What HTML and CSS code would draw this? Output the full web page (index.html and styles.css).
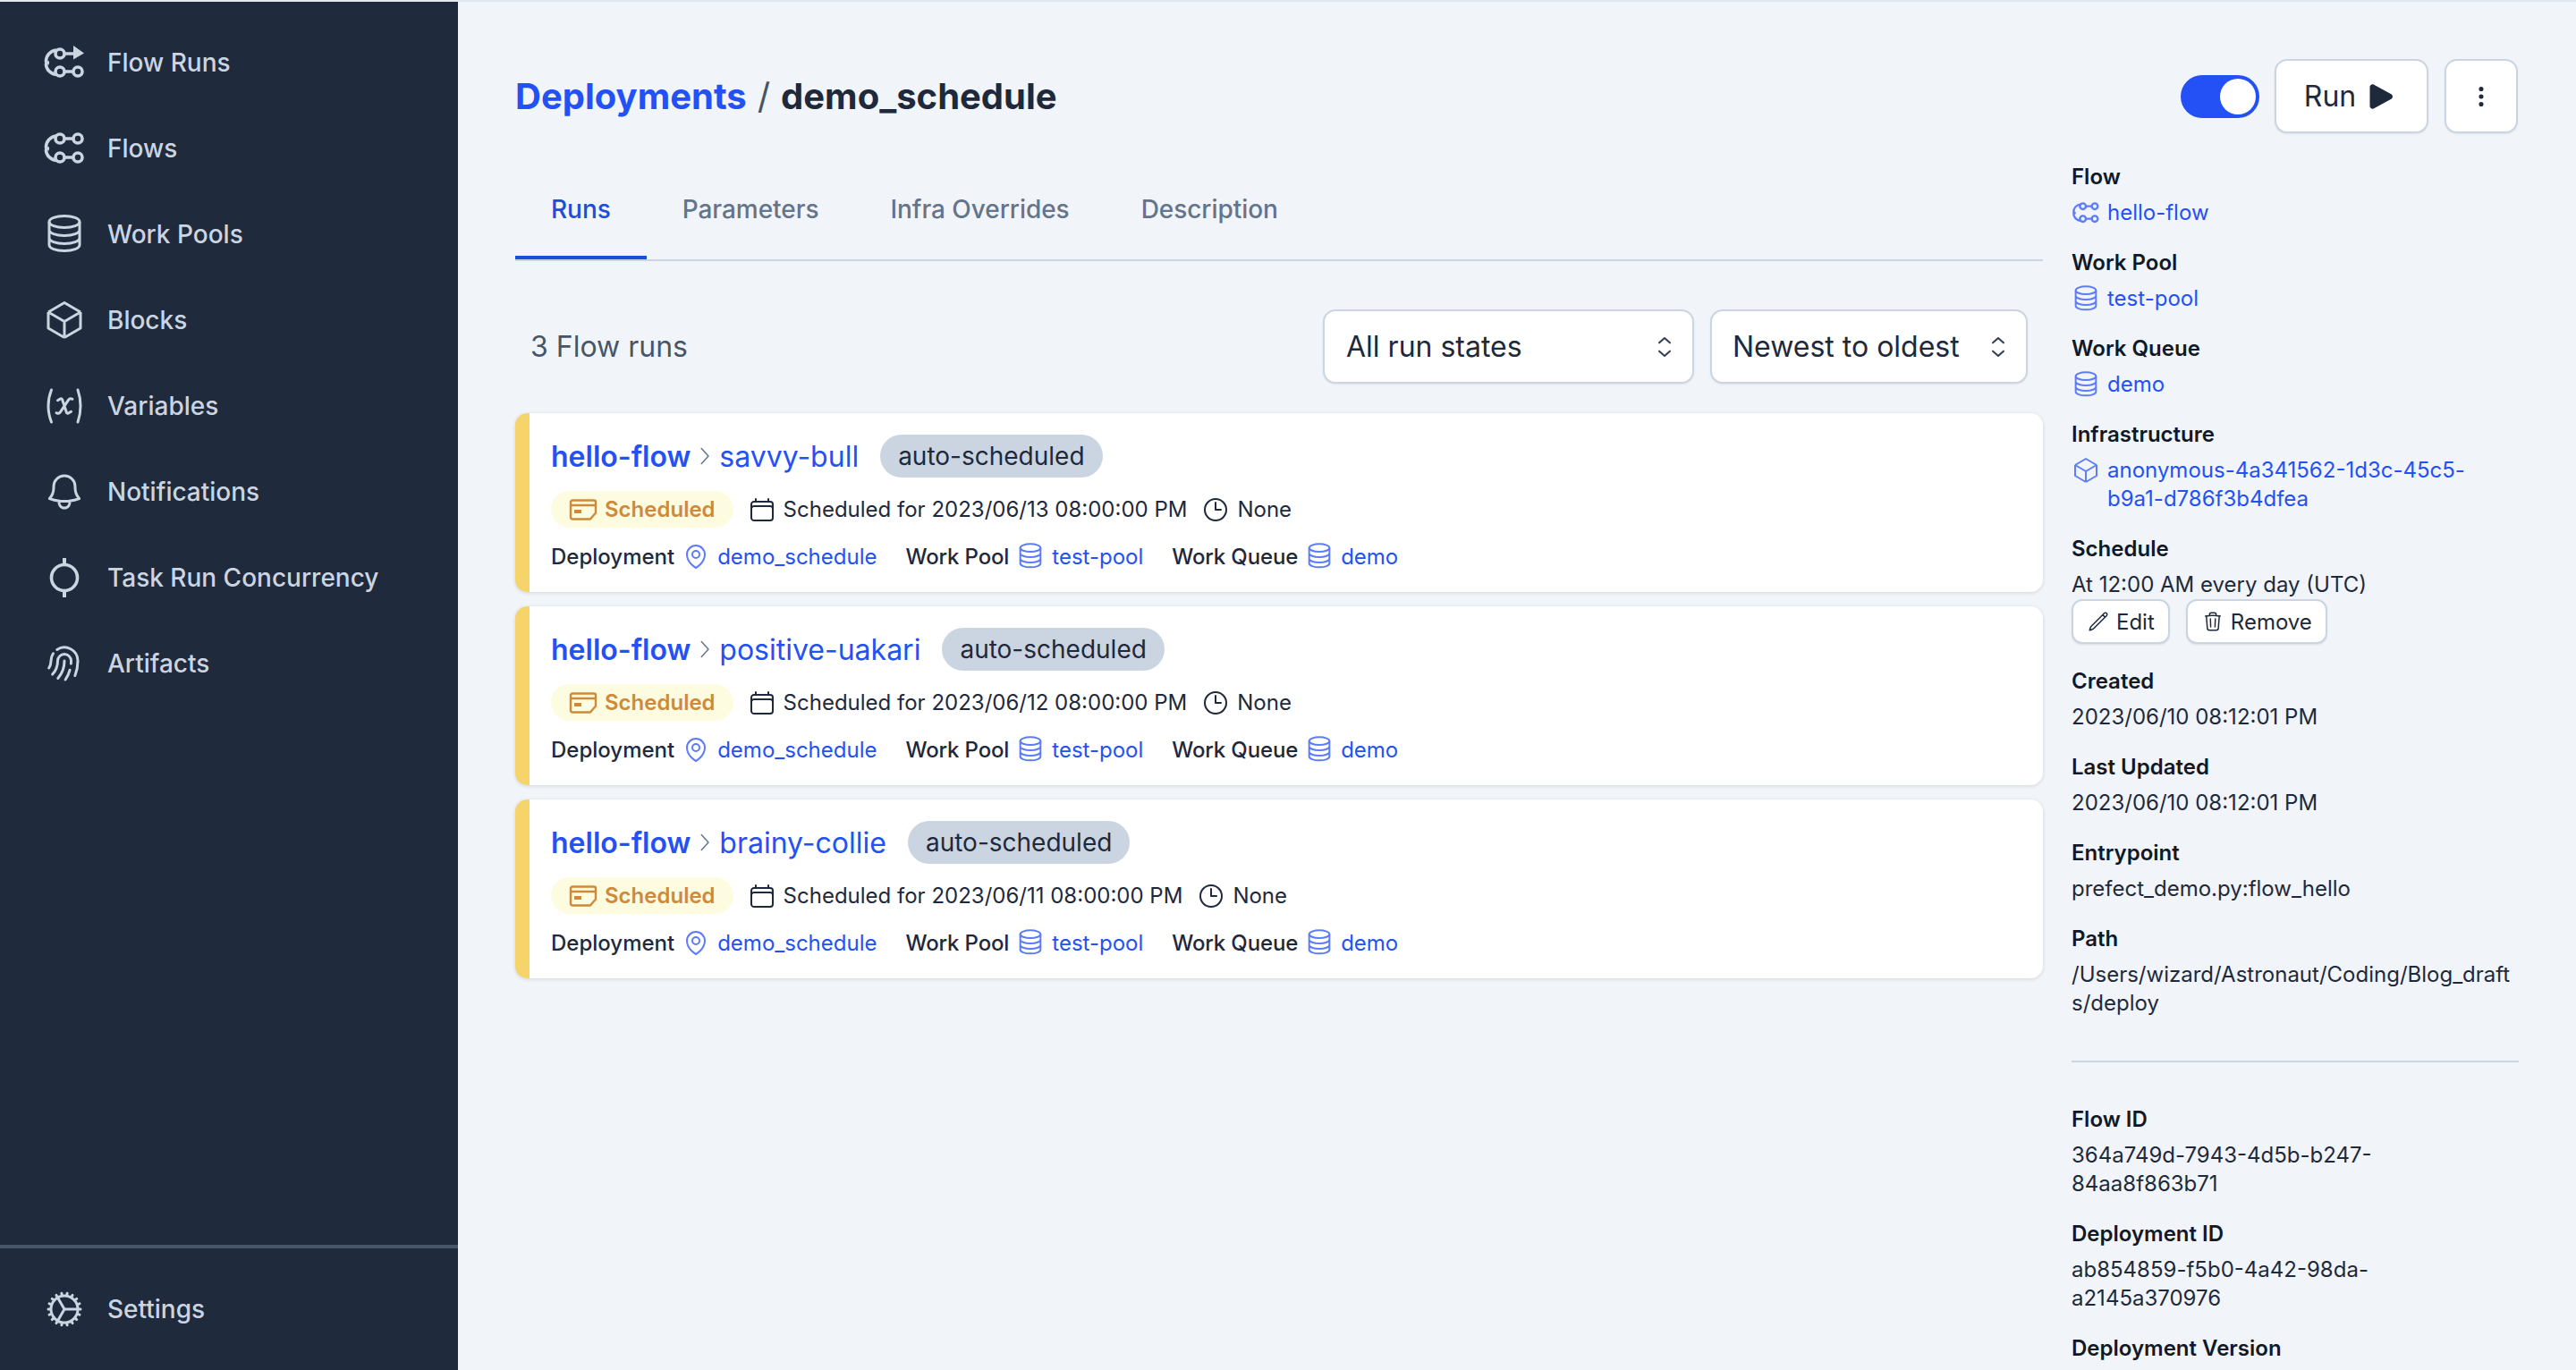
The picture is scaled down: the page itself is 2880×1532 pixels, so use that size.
FILE: index.html
```html
<!DOCTYPE html>
<html lang="en">
<head>
<meta charset="utf-8">
<title>demo_schedule</title>
<link rel="stylesheet" href="styles.css">
</head>
<body>
<svg class="sprite" xmlns="http://www.w3.org/2000/svg">
  <symbol id="i-flowruns" viewBox="0 0 48 48"><g fill="none" stroke="currentColor" stroke-width="3.600"><circle cx="19" cy="14" r="5"/><circle cx="19" cy="34" r="5"/><circle cx="39" cy="34" r="5"/><path d="M24 14h12M24 34h10M15 10C8 11 3.500 16 3.500 22.500C3.500 24 4.500 24.500 7 24.500M15 37.500C8 36.500 3.500 31 3.500 26C3.500 24.500 4.500 24 7 24"/></g><path fill="currentColor" d="M34 5l12 8.500-12 7z"/></symbol>
  <symbol id="i-flows" viewBox="0 0 48 48"><g fill="none" stroke="currentColor" stroke-width="3.600"><circle cx="19" cy="13" r="5"/><circle cx="39" cy="13" r="5"/><circle cx="19" cy="34" r="5"/><circle cx="39" cy="34" r="5"/><path d="M24 13h10M24 34h10M15 10C8 11 3.500 16 3.500 22.500C3.500 24 4.500 24.500 7 24.500M15 37.500C8 36.500 3.500 31 3.500 26C3.500 24.500 4.500 24 7 24"/></g></symbol>
  <symbol id="i-db" viewBox="0 0 48 48"><g fill="none" stroke="currentColor" stroke-width="3"><ellipse cx="24" cy="10" rx="17" ry="6.500"/><path d="M7 10v26c0 3.600 7.600 6.500 17 6.500s17-2.900 17-6.500V10M7 19c0 3.600 7.600 6.500 17 6.500s17-2.900 17-6.500M7 28c0 3.600 7.600 6.500 17 6.500s17-2.900 17-6.500"/></g></symbol>
  <symbol id="i-cube" viewBox="0 0 24 24"><path fill="none" stroke="currentColor" stroke-width="1.500" stroke-linejoin="round" d="M21 7.500l-9-5.250L3 7.500m18 0l-9 5.250m9-5.250v9l-9 5.250M3 7.500l9 5.250M3 7.500v9l9 5.250m0-9v9"/></symbol>
  <symbol id="i-var" viewBox="0 0 24 24"><path fill="none" stroke="currentColor" stroke-width="1.500" stroke-linecap="round" stroke-linejoin="round" d="M4.745 3A23.933 23.933 0 003 12c0 3.183.62 6.220 1.745 9M19.500 3c.967 2.780 1.500 5.817 1.500 9s-.533 6.220-1.500 9M8.250 8.885l1.444-.89a.75.75 0 011.105.402l2.402 7.206a.75.75 0 001.104.401l1.445-.889m-8.250.75l.213.09a1.687 1.687 0 002.062-.617l4.450-6.676a1.688 1.688 0 012.062-.618l.213.09"/></symbol>
  <symbol id="i-bell" viewBox="0 0 24 24"><path fill="none" stroke="currentColor" stroke-width="1.500" stroke-linecap="round" stroke-linejoin="round" d="M14.857 17.082a23.848 23.848 0 005.454-1.310A8.967 8.967 0 0118 9.750v-.7V9A6 6 0 006 9v.75a8.967 8.967 0 01-2.312 6.022c1.733.64 3.560 1.085 5.455 1.310m5.714 0a24.255 24.255 0 01-5.714 0m5.714 0a3 3 0 11-5.714 0"/></symbol>
  <symbol id="i-conc" viewBox="0 0 48 48"><g fill="none" stroke="currentColor" stroke-width="3.600"><circle cx="24" cy="24" r="14.500"/></g><path fill="currentColor" d="M22 2h4v8h-4zM22 38h4v8h-4z"/></symbol>
  <symbol id="i-print" viewBox="0 0 24 24"><path fill="none" stroke="currentColor" stroke-width="1.500" stroke-linecap="round" stroke-linejoin="round" d="M7.864 4.243A7.500 7.500 0 0119.500 10.500c0 2.920-.556 5.709-1.568 8.268M5.742 6.364A7.465 7.465 0 004.500 10.500a7.464 7.464 0 01-1.150 3.993m1.989 3.559A11.209 11.209 0 008.250 10.500a3.750 3.750 0 117.500 0c0 .527-.021 1.049-.064 1.565M12 10.500a14.940 14.940 0 01-3.600 9.750m6.633-4.596a18.666 18.666 0 01-2.485 5.330"/></symbol>
  <symbol id="i-cog" viewBox="0 0 24 24"><path fill="none" stroke="currentColor" stroke-width="1.500" stroke-linecap="round" stroke-linejoin="round" d="M4.500 12a7.500 7.500 0 0015 0m-15 0a7.500 7.500 0 1115 0m-15 0H3m16.500 0H21m-1.500 0H12m-8.457 3.077l1.410-.513m14.095-5.130l1.410-.513M5.106 17.785l1.150-.964m11.490-9.642l1.149-.964M7.501 19.795l.75-1.300m7.500-12.990l.75-1.300m-6.063 16.658l.26-1.477m2.605-14.772l.26-1.477m0 17.726l-.26-1.477M10.698 4.614l-.26-1.477M16.500 19.794l-.75-1.299M7.500 4.205L12 12m6.894 5.785l-1.149-.964M6.256 7.178l-1.150-.964m15.352 8.864l-1.410-.513M4.954 9.435l-1.410-.514M12.002 12l-3.750 6.495"/></symbol>
  <symbol id="i-play" viewBox="0 0 24 24"><path fill="currentColor" d="M4.500 5.653c0-1.426 1.529-2.330 2.779-1.643l11.540 6.348c1.295.712 1.295 2.573 0 3.285L7.280 19.991c-1.250.687-2.779-.217-2.779-1.643V5.653z"/></symbol>
  <symbol id="i-dots" viewBox="0 0 24 24"><g fill="currentColor"><circle cx="12" cy="5.600" r="1.900"/><circle cx="12" cy="12" r="1.900"/><circle cx="12" cy="18.400" r="1.900"/></g></symbol>
  <symbol id="i-updown" viewBox="0 0 24 24"><path fill="none" stroke="currentColor" stroke-width="1.800" stroke-linecap="round" stroke-linejoin="round" d="M6.900 8L12 3.500 17.100 8M6.900 16L12 20.500 17.100 16"/></symbol>
  <symbol id="i-chev" viewBox="0 0 24 24"><path fill="none" stroke="currentColor" stroke-width="1.500" stroke-linecap="round" stroke-linejoin="round" d="M8.250 3.500L16 12l-7.750 8.500"/></symbol>
  <symbol id="i-sched" viewBox="0 0 32 24"><g fill="none" stroke="currentColor" stroke-width="2.400" stroke-linejoin="round"><path d="M2 6.500V3.500a2 2 0 012-2h24a2 2 0 012 2v12L24 22.500H4a2 2 0 01-2-2zM2 7h28"/></g><path fill="currentColor" d="M6 12h8v4H6z"/></symbol>
  <symbol id="i-cal" viewBox="0 0 24 24"><path fill="none" stroke="currentColor" stroke-width="1.500" stroke-linecap="round" stroke-linejoin="round" d="M6.750 3v2.250M17.250 3v2.250M3 18.750V7.500a2.250 2.250 0 012.250-2.250h13.500A2.250 2.250 0 0121 7.500v11.250m-18 0A2.250 2.250 0 005.250 21h13.500A2.250 2.250 0 0021 18.750m-18 0v-7.500A2.250 2.250 0 015.250 9h13.500A2.250 2.250 0 0121 11.250v7.500"/></symbol>
  <symbol id="i-clock" viewBox="0 0 24 24"><path fill="none" stroke="currentColor" stroke-width="1.500" stroke-linecap="round" stroke-linejoin="round" d="M12 6v6h4.500m4.500 0a9 9 0 11-18 0 9 9 0 0118 0z"/></symbol>
  <symbol id="i-pin" viewBox="0 0 24 24"><g fill="none" stroke="currentColor" stroke-width="1.500" stroke-linecap="round" stroke-linejoin="round"><path d="M15 10.500a3 3 0 11-6 0 3 3 0 016 0z"/><path d="M19.500 10.500c0 7.142-7.500 11.250-7.500 11.250S4.500 17.642 4.500 10.500a7.500 7.500 0 1115 0z"/></g></symbol>
  <symbol id="i-pencil" viewBox="0 0 24 24"><path fill="none" stroke="currentColor" stroke-width="1.500" stroke-linecap="round" stroke-linejoin="round" d="M16.862 4.487l1.687-1.688a1.875 1.875 0 112.652 2.652L6.832 19.820a4.500 4.500 0 01-1.897 1.130l-2.685.8.8-2.685a4.500 4.500 0 011.130-1.897L16.863 4.487zm0 0L19.500 7.125"/></symbol>
  <symbol id="i-trash" viewBox="0 0 24 24"><path fill="none" stroke="currentColor" stroke-width="1.500" stroke-linecap="round" stroke-linejoin="round" d="M14.740 9l-.346 9m-4.788 0L9.260 9m9.968-3.210c.342.052.682.107 1.022.166m-1.022-.165L18.160 19.673a2.250 2.250 0 01-2.244 2.077H8.084a2.250 2.250 0 01-2.244-2.077L4.772 5.790m14.456 0a48.108 48.108 0 00-3.478-.397m-12 .562c.34-.059.68-.114 1.022-.165m0 0a48.110 48.110 0 013.478-.397m7.500 0v-.916c0-1.180-.91-2.164-2.090-2.201a51.964 51.964 0 00-3.320 0c-1.180.037-2.090 1.022-2.090 2.201v.916m7.500 0a48.667 48.667 0 00-7.500 0"/></symbol>
</svg>

<div class="app">
  <aside class="sidebar">
    <nav class="nav">
      <a class="nav-item"><svg class="nav-icon"><use href="#i-flowruns"/></svg>Flow Runs</a>
      <a class="nav-item"><svg class="nav-icon"><use href="#i-flows"/></svg>Flows</a>
      <a class="nav-item"><svg class="nav-icon"><use href="#i-db"/></svg>Work Pools</a>
      <a class="nav-item"><svg class="nav-icon"><use href="#i-cube"/></svg>Blocks</a>
      <a class="nav-item"><svg class="nav-icon"><use href="#i-var"/></svg>Variables</a>
      <a class="nav-item"><svg class="nav-icon"><use href="#i-bell"/></svg>Notifications</a>
      <a class="nav-item"><svg class="nav-icon"><use href="#i-conc"/></svg>Task Run Concurrency</a>
      <a class="nav-item"><svg class="nav-icon"><use href="#i-print"/></svg>Artifacts</a>
    </nav>
    <div class="nav-footer">
      <a class="nav-item"><svg class="nav-icon"><use href="#i-cog"/></svg>Settings</a>
    </div>
  </aside>

  <main class="main">
    <header class="page-head">
      <h1 class="crumbs"><a class="crumb-link">Deployments</a><span class="crumb-sep">/</span><span>demo_schedule</span></h1>
      <div class="actions">
        <span class="toggle"><span class="knob"></span></span>
        <button class="btn btn-run">Run<svg class="play"><use href="#i-play"/></svg></button>
        <button class="btn btn-more"><svg class="dots"><use href="#i-dots"/></svg></button>
      </div>
    </header>

    <div class="columns">
      <section class="content">
        <div class="tabs">
          <span class="tab active">Runs</span>
          <span class="tab">Parameters</span>
          <span class="tab">Infra Overrides</span>
          <span class="tab">Description</span>
        </div>

        <div class="filters">
          <span class="count">3 Flow runs</span>
          <div class="select select-state">All run states<svg class="updown"><use href="#i-updown"/></svg></div>
          <div class="select select-sort">Newest to oldest<svg class="updown"><use href="#i-updown"/></svg></div>
        </div>

        <div class="runs">
          <article class="run">
            <div class="run-title"><a class="flow-name">hello-flow</a><svg class="chev"><use href="#i-chev"/></svg><a class="run-name">savvy-bull</a><span class="tag">auto-scheduled</span></div>
            <div class="run-meta"><span class="badge"><svg class="badge-icon"><use href="#i-sched"/></svg>Scheduled</span><span class="meta"><svg class="ico"><use href="#i-cal"/></svg>Scheduled for 2023/06/13 08:00:00 PM</span><span class="meta"><svg class="ico"><use href="#i-clock"/></svg>None</span></div>
            <div class="run-rel"><span class="rel"><b>Deployment</b><svg class="ico link-ico"><use href="#i-pin"/></svg><a>demo_schedule</a></span><span class="rel"><b>Work Pool</b><svg class="ico link-ico"><use href="#i-db"/></svg><a>test-pool</a></span><span class="rel"><b>Work Queue</b><svg class="ico link-ico"><use href="#i-db"/></svg><a>demo</a></span></div>
          </article>
          <article class="run">
            <div class="run-title"><a class="flow-name">hello-flow</a><svg class="chev"><use href="#i-chev"/></svg><a class="run-name">positive-uakari</a><span class="tag">auto-scheduled</span></div>
            <div class="run-meta"><span class="badge"><svg class="badge-icon"><use href="#i-sched"/></svg>Scheduled</span><span class="meta"><svg class="ico"><use href="#i-cal"/></svg>Scheduled for 2023/06/12 08:00:00 PM</span><span class="meta"><svg class="ico"><use href="#i-clock"/></svg>None</span></div>
            <div class="run-rel"><span class="rel"><b>Deployment</b><svg class="ico link-ico"><use href="#i-pin"/></svg><a>demo_schedule</a></span><span class="rel"><b>Work Pool</b><svg class="ico link-ico"><use href="#i-db"/></svg><a>test-pool</a></span><span class="rel"><b>Work Queue</b><svg class="ico link-ico"><use href="#i-db"/></svg><a>demo</a></span></div>
          </article>
          <article class="run">
            <div class="run-title"><a class="flow-name">hello-flow</a><svg class="chev"><use href="#i-chev"/></svg><a class="run-name">brainy-collie</a><span class="tag">auto-scheduled</span></div>
            <div class="run-meta"><span class="badge"><svg class="badge-icon"><use href="#i-sched"/></svg>Scheduled</span><span class="meta"><svg class="ico"><use href="#i-cal"/></svg>Scheduled for 2023/06/11 08:00:00 PM</span><span class="meta"><svg class="ico"><use href="#i-clock"/></svg>None</span></div>
            <div class="run-rel"><span class="rel"><b>Deployment</b><svg class="ico link-ico"><use href="#i-pin"/></svg><a>demo_schedule</a></span><span class="rel"><b>Work Pool</b><svg class="ico link-ico"><use href="#i-db"/></svg><a>test-pool</a></span><span class="rel"><b>Work Queue</b><svg class="ico link-ico"><use href="#i-db"/></svg><a>demo</a></span></div>
          </article>
        </div>
      </section>

      <aside class="details">
        <div class="field"><h2>Flow</h2><div class="val link"><svg class="ico link-ico"><use href="#i-flows"/></svg><a>hello-flow</a></div></div>
        <div class="field"><h2>Work Pool</h2><div class="val link"><svg class="ico link-ico"><use href="#i-db"/></svg><a>test-pool</a></div></div>
        <div class="field"><h2>Work Queue</h2><div class="val link"><svg class="ico link-ico"><use href="#i-db"/></svg><a>demo</a></div></div>
        <div class="field"><h2>Infrastructure</h2><div class="val link"><svg class="ico link-ico"><use href="#i-cube"/></svg><a>anonymous-4a341562-1d3c-45c5-b9a1-d786f3b4dfea</a></div></div>
        <div class="field field-sched"><h2>Schedule</h2><div class="val">At 12:00 AM every day (UTC)</div>
          <div class="sched-btns"><button class="mini"><svg class="mini-ico"><use href="#i-pencil"/></svg>Edit</button><button class="mini"><svg class="mini-ico"><use href="#i-trash"/></svg>Remove</button></div></div>
        <div class="field"><h2>Created</h2><div class="val">2023/06/10 08:12:01 PM</div></div>
        <div class="field"><h2>Last Updated</h2><div class="val">2023/06/10 08:12:01 PM</div></div>
        <div class="field"><h2>Entrypoint</h2><div class="val">prefect_demo.py:flow_hello</div></div>
        <div class="field"><h2>Path</h2><div class="val breakall">/Users/wizard/Astronaut/Coding/Blog_drafts/deploy</div></div>
        <hr class="rule">
        <div class="field"><h2>Flow ID</h2><div class="val narrow">364a749d-7943-4d5b-b247-84aa8f863b71</div></div>
        <div class="field"><h2>Deployment ID</h2><div class="val narrow">ab854859-f5b0-4a42-98da-a2145a370976</div></div>
        <div class="field"><h2>Deployment Version</h2></div>
      </aside>
    </div>
  </main>
</div>
</body>
</html>
```

FILE: styles.css
```css
* { box-sizing: border-box; }
html, body { margin: 0; height: 1532px; overflow: hidden; }
body {
  background: #e2e8f0;
  padding-top: 2px;
  font-family: Inter, "Liberation Sans", sans-serif;
  color: #1e293b;
}
a { color: #2351f5; }
.sprite { position: absolute; width: 0; height: 0; }

.app { display: flex; height: 1530px; background: #f1f5f9; }

.sidebar {
  width: 512px;
  flex: none;
  background: #1f2a3c;
  display: flex;
  flex-direction: column;
  padding-top: 20px;
  color: #cbd5e1;
}
.nav { flex: 1; }
.nav-item {
  display: flex;
  align-items: center;
  gap: 24px;
  height: 96px;
  padding-left: 48px;
  font-size: 28px;
  font-weight: 500;
  color: #cbd5e1;
}
.nav-icon { width: 48px; height: 48px; flex: none; }
.nav-footer { border-top: 4px solid #475569; padding: 20px 0 20px; }

.main { flex: 1; padding: 64px 64px 0; min-width: 0; }
.page-head { display: flex; align-items: center; justify-content: space-between; height: 83px; }
.crumbs { margin: 0; font-size: 40px; font-weight: 700; line-height: 83px; display: flex; gap: 12px; }
.crumb-link { color: #2351f5; }
.crumb-sep { color: #475569; font-weight: 400; }
.actions { display: flex; align-items: center; margin-right: 1px; }
.toggle {
  width: 88px; height: 48px; border-radius: 24px; background: #2351f5;
  display: flex; justify-content: flex-end; align-items: center; padding-right: 4px; margin-right: 17px;
}
.knob { width: 40px; height: 40px; border-radius: 50%; background: #fff; }
.btn {
  height: 83px; border: 2px solid #cbd5e1; border-radius: 14px; background: #fff;
  box-shadow: 0 1px 2px rgba(15, 23, 42, .08);
  font: 400 32px Inter, sans-serif; color: #1e293b;
  display: flex; align-items: center; justify-content: center; padding: 0;
}
.btn-run { width: 172px; gap: 8px; margin-right: 18px; }
.play { width: 40px; height: 40px; }
.btn-more { width: 82px; }
.dots { width: 32px; height: 32px; }

.columns { display: flex; gap: 32px; padding-top: 29px; }
.content { width: 1708px; flex: none; }
.tabs { display: flex; height: 114px; border-bottom: 2px solid #cbd5e1; }
.tab {
  padding: 4px 40px 0; font-size: 28px; font-weight: 500; color: #64748b; letter-spacing: -.05px;
  display: flex; align-items: center; border-bottom: 4px solid transparent;
}
.tab.active { color: #1d4ed8; border-bottom-color: #1d4ed8; }

.filters { display: flex; align-items: center; margin-top: 54px; height: 83px; padding-right: 17px; }
.count { font-size: 32px; color: #475569; margin-left: 17px; margin-right: auto; }
.select {
  height: 83px; background: #fff; border: 2px solid #cbd5e1; border-radius: 14px;
  box-shadow: 0 1px 2px rgba(15, 23, 42, .08);
  font-size: 32px; display: flex; align-items: center; justify-content: space-between; padding: 0 17px 0 24px;
}
.select-state { width: 415px; margin-right: 18px; }
.select-sort { width: 355px; padding-left: 23px; }
.updown { width: 28px; height: 28px; color: #334155; }

.runs { display: flex; flex-direction: column; gap: 16px; margin-top: 33px; }
.run {
  height: 200px; background: #fff; border-left: 16px solid #f6d469; border-radius: 14px;
  box-shadow: 0 1px 4px rgba(15, 23, 42, .14);
  padding: 24px 24px 0;
}
.run-title { display: flex; align-items: center; height: 48px; font-size: 32px; }
.flow-name { font-weight: 600; }
.chev { width: 24px; height: 30px; color: #64748b; margin: 0 4px 0 4px; }
.tag {
  height: 48px; padding: 0 20px; border-radius: 24px; background: #cbd5e1; margin-left: 24px;
  display: flex; align-items: center; font-size: 28px; color: #1e293b;
}
.run-meta { display: flex; align-items: center; height: 41px; margin-top: 15px; font-size: 24px; gap: 16px; }
.badge {
  height: 41px; padding: 0 20px; border-radius: 21px; background: #fdfce0; color: #d08a37;
  font-weight: 600; display: flex; align-items: center; gap: 8px;
}
.badge-icon { width: 32px; height: 24px; }
.meta { display: flex; align-items: center; gap: 8px; }
.ico { width: 32px; height: 32px; flex: none; }
.run-rel { display: flex; align-items: center; gap: 32px; height: 32px; margin-top: 16px; font-size: 24px; }
.rel { display: flex; align-items: center; gap: 8px; }
.rel b { font-weight: 500; }
.rel + .rel b { letter-spacing: -.15px; }
.link-ico { color: #5d7cf7; }

.details { width: 500px; flex: none; margin-top: 4px; font-size: 24px; line-height: 32px; }
.field { margin-bottom: 24px; }
.field-sched { margin-bottom: 26px; }
.field h2 { margin: 0 0 8px; font-size: 24px; line-height: 32px; font-weight: 600; color: #111827; }
.val { color: #1e293b; }
.val.link { display: flex; gap: 8px; align-items: flex-start; }
.breakall { word-break: break-all; }
.narrow { width: 400px; }
.sched-btns { display: flex; gap: 18px; }
.mini {
  height: 50px; border: 2px solid #cbd5e1; border-radius: 12px; background: #fff;
  box-shadow: 0 1px 2px rgba(15, 23, 42, .1);
  font: 400 24px Inter, sans-serif; color: #1e293b;
  display: flex; align-items: center; gap: 8px; padding: 0 15px 0 16px;
}
.mini-ico { width: 24px; height: 24px; }
.rule { border: 0; border-top: 2px solid #cbd5e1; margin: 48px 0 48px; }
```
